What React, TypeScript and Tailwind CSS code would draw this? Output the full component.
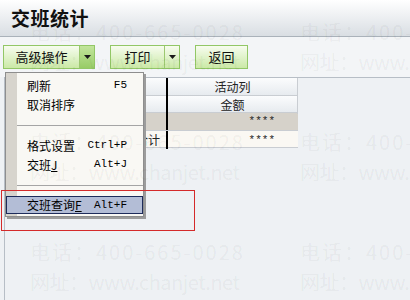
import React from "react";

function DropArrow({ active }: { active?: boolean }) {
  return (
    <div
      className={
        "flex w-[15px] items-center justify-center border-l border-[#9cc870] " +
        (active ? "bg-linear-to-b from-[#c2e59c] to-[#98cc66]" : "")
      }
    >
      <svg width="7" height="4" viewBox="0 0 7 4">
        <path d="M0 0h7L3.5 4z" fill="#1a1a1a" />
      </svg>
    </div>
  );
}

function GreenButton({
  label,
  width,
  split,
  active,
}: {
  label: string;
  width: string;
  split?: boolean;
  active?: boolean;
}) {
  return (
    <div
      className={
        "flex h-[24px] border border-[#92c766] bg-linear-to-b from-[#f7fcef] to-[#cbe9a6] " +
        width
      }
    >
      <div className="flex flex-1 items-center justify-center text-[13px] text-[#111]">
        {label}
      </div>
      {split && <DropArrow active={active} />}
    </div>
  );
}

function MenuItem({ label, keyChar, shortcut }: { label: string; keyChar?: string; shortcut?: string }) {
  return (
    <div className="flex h-[19px] items-center justify-between pl-[21px] pr-[16px]">
      <span className="text-[12px] leading-none">
        {label}
        {keyChar && <span className="underline">{keyChar}</span>}
      </span>
      {shortcut && (
        <span className="font-['Liberation_Mono',monospace] text-[11px] leading-none">{shortcut}</span>
      )}
    </div>
  );
}

function Separator() {
  return (
    <div className="flex h-[22px] items-center pl-[11px]">
      <div className="h-px w-full bg-[#a5a5a5]" />
    </div>
  );
}

const marks = [0, 110, 220];

export default function App() {
  return (
    <div className="relative flex h-[300px] w-[410px] flex-col overflow-hidden bg-[#eef1f4] font-['Noto_Sans_CJK_SC',sans-serif] text-black">
      {/* title */}
      <div className="flex h-[37px] shrink-0 items-center border-b border-[#aab2ba] bg-linear-to-b from-white to-[#d9dee3] pl-[11px]">
        <h1 className="text-[19px] font-bold tracking-[0.5px] text-[#111]">交班统计</h1>
      </div>

      {/* toolbar */}
      <div className="flex h-[40px] shrink-0 items-center gap-[15px] bg-[#f3f5f7] pl-[3px]">
        <GreenButton label="高级操作" width="w-[92px]" split active />
        <GreenButton label="打印" width="w-[70px]" split />
        <GreenButton label="返回" width="w-[53px]" />
      </div>

      {/* grid */}
      <div className="ml-[4px] flex-1 border-l border-t border-[#b7bec6]">
        <div className="w-[293px] text-[12px] text-[#222]">
          <div className="grid h-[18px] grid-cols-[161px_2px_1fr] border-b border-[#c9cdd2] bg-linear-to-b from-[#fbfcfd] to-[#e7ebef]">
            <div />
            <div className="bg-black" />
            <div className="flex items-center justify-center border-r border-[#c9cdd2]">活动列</div>
          </div>
          <div className="grid h-[17px] grid-cols-[161px_2px_1fr] border-b border-[#c9cdd2] bg-linear-to-b from-[#fbfcfd] to-[#e7ebef]">
            <div />
            <div className="bg-black" />
            <div className="flex items-center justify-center border-r border-[#c9cdd2]">金额</div>
          </div>
          <div className="grid h-[18px] grid-cols-[161px_2px_1fr] border-b border-[#c9cdd2] bg-[#d6d2ca]">
            <div />
            <div className="bg-black" />
            <div className="flex items-center justify-end pr-[23px] font-['Liberation_Mono',monospace] text-[11px]">****</div>
          </div>
          <div className="grid h-[17px] grid-cols-[161px_2px_1fr] border-b border-[#c9cdd2] bg-[#faf8f3]">
            <div className="flex items-center justify-end pr-[6px]">合计</div>
            <div className="bg-black" />
            <div className="flex items-center justify-end pr-[23px] font-['Liberation_Mono',monospace] text-[11px]">****</div>
          </div>
        </div>
      </div>

      {/* dropdown menu */}
      <div className="absolute left-[5px] top-[72px] h-[145px] w-[139px] border border-[#8e8e8e] bg-[linear-gradient(to_right,#d7d4cd_11px,#f9f8f4_11px)] pt-[3px] shadow-[2px_2px_0_#9c9c9c]">
        <MenuItem label="刷新" shortcut="F5" />
        <MenuItem label="取消排序" />
        <Separator />
        <MenuItem label="格式设置" shortcut="Ctrl+P" />
        <MenuItem label="交班" keyChar="J" shortcut="Alt+J" />
        <Separator />
        <div className="flex h-[18px] items-center justify-between border border-[#1d2b5a] bg-[#b3bdd6] pl-[20px] pr-[15px]">
          <span className="text-[12px] leading-none">
            交班查询<span className="underline">F</span>
          </span>
          <span className="font-['Liberation_Mono',monospace] text-[11px] leading-none">Alt+F</span>
        </div>
      </div>

      {/* red highlight frame */}
      <div className="pointer-events-none absolute left-[1px] top-[190px] h-[41px] w-[194px] border border-[#d42a2a]" />

      {/* watermark */}
      <div className="pointer-events-none absolute inset-0 text-[20px] leading-[20px] text-black/[0.055]">
        {marks.map((y) => (
          <React.Fragment key={y}>
            <div className="absolute left-[30px] whitespace-nowrap tracking-[2px]" style={{ top: y + 22 }}>电话：400-665-0028</div>
            <div className="absolute left-[30px] whitespace-nowrap tracking-[-0.5px]" style={{ top: y + 52 }}>网址：www.chanjet.net</div>
            <div className="absolute left-[300px] whitespace-nowrap tracking-[2px]" style={{ top: y + 22 }}>电话：400-665-0028</div>
            <div className="absolute left-[300px] whitespace-nowrap tracking-[-0.5px]" style={{ top: y + 52 }}>网址：www.chanjet.net</div>
          </React.Fragment>
        ))}
      </div>
    </div>
  );
}
